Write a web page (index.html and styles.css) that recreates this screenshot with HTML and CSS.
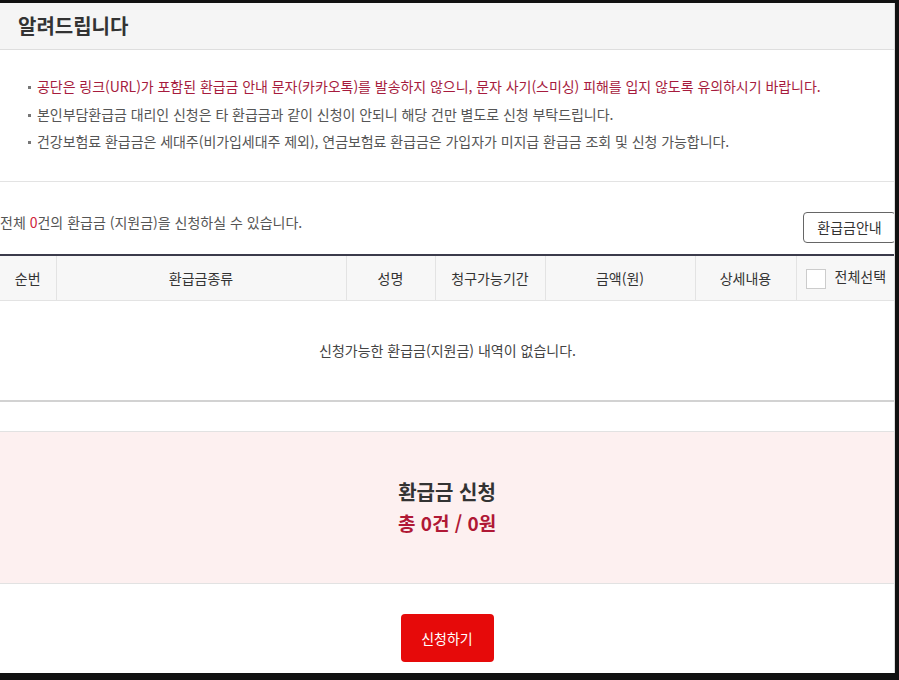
FILE: index.html
```html
<!DOCTYPE html>
<html lang="ko">
  <head>
    <meta charset="UTF-8" />
    <meta name="viewport" content="width=device-width, initial-scale=1.0" />
    <title>환급금 조회</title>
    <link rel="stylesheet" href="styles.css">
  </head>
  <body>
    <div class="page">
      <div class="notice_title">알려드립니다</div>

      <ul class="notice_list">
        <li class="point">공단은 링크(URL)가 포함된 환급금 안내 문자(카카오톡)를 발송하지 않으니, 문자 사기(스미싱) 피해를 입지 않도록 유의하시기 바랍니다.</li>
        <li>본인부담환급금 대리인 신청은 타 환급금과 같이 신청이 안되니 해당 건만 별도로 신청 부탁드립니다.</li>
        <li>건강보험료 환급금은 세대주(비가입세대주 제외), 연금보험료 환급금은 가입자가 미지급 환급금 조회 및 신청 가능합니다.</li>
      </ul>

      <div class="info_row">
        <p class="total_text">전체 <em>0</em>건의 환급금 (지원금)을 신청하실 수 있습니다.</p>
        <button class="guide_button">환급금안내</button>
      </div>

      <table class="refund_table">
        <colgroup>
          <col class="col_no" />
          <col class="col_kind" />
          <col class="col_name" />
          <col class="col_period" />
          <col class="col_amount" />
          <col class="col_detail" />
          <col class="col_check" />
        </colgroup>
        <thead>
          <tr>
            <th>순번</th>
            <th>환급금종류</th>
            <th>성명</th>
            <th>청구가능기간</th>
            <th>금액(원)</th>
            <th>상세내용</th>
            <th class="check_cell"><span class="check_box"></span>전체선택</th>
          </tr>
        </thead>
        <tbody>
          <tr>
            <td colspan="7" class="empty_cell">신청가능한 환급금(지원금) 내역이 없습니다.</td>
          </tr>
        </tbody>
      </table>

      <div class="summary_box">
        <div class="summary_title">환급금 신청</div>
        <div class="summary_total">총 0건 / 0원</div>
      </div>

      <div class="button_wrapper">
        <button class="apply_button">신청하기</button>
      </div>
    </div>
  </body>
</html>
```

FILE: styles.css
```css
html,
body {
  margin: 0;
  padding: 0;
  background-color: #111;
}

body {
  font-family: "Noto Sans CJK KR", "Noto Sans", sans-serif;
  color: #333;
}

.page {
  width: 894px;
  height: 670px;
  margin-top: 3px;
  background-color: #fff;
  border-right: 1px solid #ddd;
  overflow: hidden;
}

.notice_title {
  height: 46px;
  line-height: 46px;
  padding-left: 18px;
  background-color: #f5f5f5;
  border-bottom: 1px solid #dedede;
  font-size: 20px;
  font-weight: bold;
  color: #333;
}

.notice_list {
  margin: 0;
  padding: 23px 0 25px 37px;
  list-style: none;
  border-bottom: 1px solid #e3e3e3;
}

.notice_list li {
  position: relative;
  line-height: 27.5px;
  font-size: 14px;
  color: #555;
  letter-spacing: -0.05px;
}

.notice_list li::before {
  content: "";
  position: absolute;
  left: -9px;
  top: 13px;
  width: 3px;
  height: 3px;
  background-color: #777;
}

.notice_list li.point {
  color: #a61b3d;
}

.info_row {
  display: flex;
  justify-content: space-between;
  align-items: flex-start;
  padding: 30px 0 11px 0;
}

.total_text {
  margin: 0;
  line-height: 20px;
  font-size: 14px;
  color: #555;
}

.total_text em {
  font-style: normal;
  color: #d0233a;
}

.guide_button {
  width: 93px;
  height: 31px;
  margin-right: -2px;
  background-color: #fff;
  border: 1px solid #666;
  border-radius: 4px;
  font-family: inherit;
  font-size: 14px;
  color: #333;
}

.refund_table {
  width: 895px;
  border-collapse: collapse;
  table-layout: fixed;
  border-top: 2px solid #3b3b4b;
}

.col_no { width: 56px; }
.col_kind { width: 290px; }
.col_name { width: 89px; }
.col_period { width: 110px; }
.col_amount { width: 150px; }
.col_detail { width: 101px; }
.col_check { width: 99px; }

.refund_table th {
  height: 44px;
  padding: 0;
  background-color: #f7f7f7;
  border-left: 1px solid #e3e3e3;
  border-bottom: 1px solid #e3e3e3;
  font-size: 14px;
  font-weight: normal;
  color: #333;
}

.refund_table th:first-child {
  border-left: none;
}

.check_cell {
  text-align: left;
}

.check_box {
  display: inline-block;
  width: 18px;
  height: 18px;
  margin: 0 9px 0 9px;
  vertical-align: middle;
  background-color: #fff;
  border: 1px solid #ccc;
}

.empty_cell {
  height: 99px;
  padding: 0;
  text-align: center;
  font-size: 14px;
  color: #444;
  border-bottom: 2px solid #d2d2d2;
}

.summary_box {
  margin-top: 29px;
  padding: 44px 0 45px 0;
  background-color: #fdf0f0;
  border-top: 1px solid #e2e2e2;
  border-bottom: 1px solid #e2e2e2;
  text-align: center;
  font-size: 19px;
  font-weight: bold;
  line-height: 31px;
}

.summary_title {
  font-size: 20px;
  color: #333;
}

.summary_total {
  color: #b01835;
}

.button_wrapper {
  text-align: center;
  padding-top: 30px;
}

.apply_button {
  width: 93px;
  height: 48px;
  background-color: #e60a0a;
  border: none;
  border-radius: 4px;
  font-family: inherit;
  font-size: 14px;
  color: #fff;
}
```
